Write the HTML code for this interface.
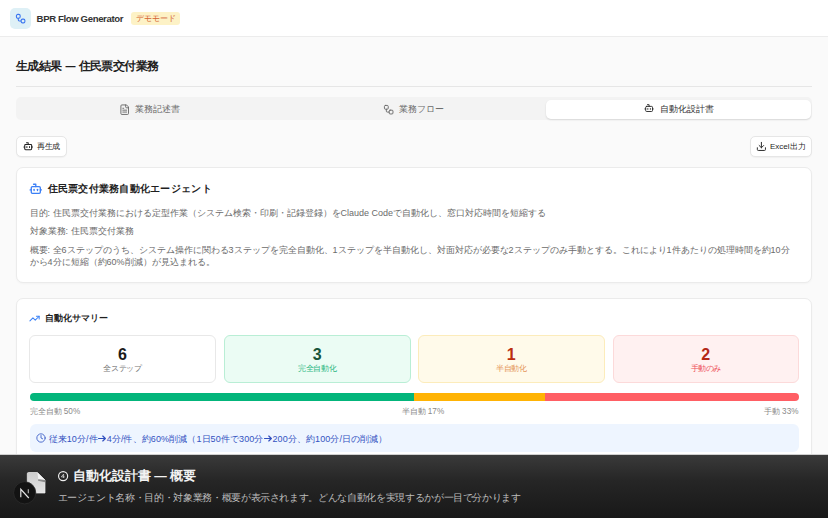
<!DOCTYPE html>
<html lang="ja">
<head>
<meta charset="utf-8">
<style>
*{box-sizing:border-box;margin:0;padding:0}
html,body{width:828px;height:518px;overflow:hidden}
body{background:#fafafa;font-family:"Liberation Sans",sans-serif;color:#222;position:relative}
.abs{position:absolute}
.hdr{position:absolute;left:0;top:0;width:828px;height:37px;background:#fff;border-bottom:1px solid #ececec}
.logo{position:absolute;left:10px;top:8px;width:21px;height:21px;border-radius:5px;background:#def0f6}
.brand{position:absolute;left:36.6px;top:12.8px;font-size:9.6px;letter-spacing:-0.38px;font-weight:bold;color:#333;white-space:nowrap;line-height:12px}
.badge{position:absolute;left:131px;top:12px;width:49px;height:13px;border-radius:3px;background:#fdf2c6;color:#d4612e;font-size:7.5px;line-height:13px;text-align:center;white-space:nowrap}
.title{position:absolute;left:16px;top:58px;font-size:12px;letter-spacing:-0.6px;font-weight:bold;line-height:16px;white-space:nowrap;color:#1f1f1f}
.hr{position:absolute;left:16px;top:86px;width:796px;height:1px;background:#e6e6e6}
.tabs{position:absolute;left:16px;top:97px;width:796px;height:23px;border-radius:5px;background:#f3f3f3}
.tabact{position:absolute;left:546px;top:100px;width:265px;height:19px;background:#fff;border-radius:5px;box-shadow:0 1px 2px rgba(0,0,0,.12)}
.tabt{position:absolute;top:102.5px;font-size:9px;line-height:13px;white-space:nowrap}
.btn{position:absolute;top:136px;height:21px;background:#fff;border:1px solid #e6e6e6;border-radius:5px;box-shadow:0 1px 1px rgba(0,0,0,.04)}
.btnt{position:absolute;top:140.6px;font-size:8px;line-height:12px;color:#1f1f1f;white-space:nowrap}
.card{position:absolute;left:16px;width:796px;background:#fff;border:1px solid #ebebeb;border-radius:7px;box-shadow:0 1px 2px rgba(0,0,0,.03)}
.ctitle{position:absolute;left:47.5px;top:181.5px;font-size:10px;letter-spacing:0.27px;font-weight:bold;line-height:14px;white-space:nowrap;color:#1f1f1f}
.p{position:absolute;left:30px;font-size:9px;line-height:12.5px;color:#6b6b6b;white-space:nowrap}
.stitle{position:absolute;left:44.8px;top:311.6px;font-size:9px;font-weight:bold;line-height:13px;white-space:nowrap;color:#1f1f1f}
.stat{position:absolute;top:334.5px;height:48px;width:186.5px;border-radius:6px;border:1px solid #e8e8e8;text-align:center}
.stat .n{position:absolute;left:0;right:0;top:10px;font-size:16px;font-weight:bold;line-height:18px}
.stat .l{position:absolute;left:0;right:0;top:27.5px;font-size:7.7px;line-height:11px;letter-spacing:-0.4px}
.bar{position:absolute;left:29.5px;top:393px;width:769.5px;height:8px;border-radius:4px;overflow:hidden;display:flex}
.blab{position:absolute;top:405.5px;font-size:8.2px;line-height:11px;color:#8a8a8a;white-space:nowrap}
.info{position:absolute;left:29.5px;top:424px;width:769.5px;height:28px;border-radius:6px;background:#eef5ff}
.itext{position:absolute;left:48.5px;top:432.5px;font-size:9px;letter-spacing:0.1px;line-height:13px;color:#3352bf;white-space:nowrap}
.ov{position:absolute;left:0;top:454px;width:828px;height:64px;background:linear-gradient(#3a3a3a 0,#262626 40%,#181818 100%);border-top:1px solid #d0d0d0}
.ovt{position:absolute;left:58px;top:467px;font-size:12.5px;font-weight:bold;line-height:16px;color:#f2f2f2;white-space:nowrap}
.ovs{position:absolute;left:57.5px;top:490.5px;font-size:9.6px;letter-spacing:-0.35px;line-height:13px;color:#bdbdbd;white-space:nowrap}
</style>
</head>
<body>
<div class="hdr"></div>
<div class="logo"></div>
<svg class="abs" style="left:15.3px;top:12.8px" width="11.3" height="11.3" viewBox="0 0 24 24" fill="none" stroke="#3b76f0" stroke-width="2.3" stroke-linecap="round" stroke-linejoin="round"><rect width="8" height="8" x="3" y="3" rx="3"/><path d="M7 11v4a2 2 0 0 0 2 2h4"/><rect width="8" height="8" x="13" y="13" rx="3"/></svg>
<div class="brand">BPR Flow Generator</div>
<div class="badge">デモモード</div>

<div class="title">生成結果<span style="letter-spacing:0;font-size:10px;margin:0 0.4px 0 1px"> — </span>住民票交付業務</div>
<div class="hr"></div>

<div class="tabs"></div>
<div class="tabact"></div>
<svg class="abs" style="left:118.8px;top:103.5px" width="11.4" height="11.4" viewBox="0 0 24 24" fill="none" stroke="#6a6a6a" stroke-width="2" stroke-linecap="round" stroke-linejoin="round"><path d="M15 2H6a2 2 0 0 0-2 2v16a2 2 0 0 0 2 2h12a2 2 0 0 0 2-2V7Z"/><path d="M14 2v4a2 2 0 0 0 2 2h4"/><path d="M10 9H8"/><path d="M16 13H8"/><path d="M16 17H8"/></svg>
<div class="tabt" style="left:134.5px;color:#6a6a6a">業務記述書</div>
<svg class="abs" style="left:383px;top:103.5px" width="11.4" height="11.4" viewBox="0 0 24 24" fill="none" stroke="#6a6a6a" stroke-width="2" stroke-linecap="round" stroke-linejoin="round"><rect width="8" height="8" x="3" y="3" rx="2"/><path d="M7 11v4a2 2 0 0 0 2 2h4"/><rect width="8" height="8" x="13" y="13" rx="2"/></svg>
<div class="tabt" style="left:399px;color:#6a6a6a">業務フロー</div>
<svg class="abs" style="left:643.8px;top:103.4px" width="10.2" height="10.2" viewBox="0 0 24 24" fill="none" stroke="#2a2a2a" stroke-width="2.2" stroke-linecap="round" stroke-linejoin="round"><path d="M12 8V4H8"/><rect width="16" height="12" x="4" y="8" rx="2"/><path d="M2 14h2"/><path d="M20 14h2"/><path d="M15 13v2"/><path d="M9 13v2"/></svg>
<div class="tabt" style="left:659.5px;color:#333">自動化設計書</div>

<div class="btn" style="left:16px;width:51px"></div>
<svg class="abs" style="left:22.7px;top:141px" width="10.4" height="10.4" viewBox="0 0 24 24" fill="none" stroke="#222" stroke-width="2.4" stroke-linecap="round" stroke-linejoin="round"><path d="M12 8V4H8"/><rect width="16" height="12" x="4" y="8" rx="2"/><path d="M2 14h2"/><path d="M20 14h2"/><path d="M15 13v2"/><path d="M9 13v2"/></svg>
<div class="btnt" style="left:37px;letter-spacing:-0.33px">再生成</div>
<div class="btn" style="left:750px;width:62px"></div>
<svg class="abs" style="left:756px;top:141.1px" width="10.8" height="10.8" viewBox="0 0 24 24" fill="none" stroke="#2a2a2a" stroke-width="2.2" stroke-linecap="round" stroke-linejoin="round"><path d="M21 15v4a2 2 0 0 1-2 2H5a2 2 0 0 1-2-2v-4"/><polyline points="7 10 12 15 17 10"/><line x1="12" x2="12" y1="15" y2="3"/></svg>
<div class="btnt" style="left:770px">Excel出力</div>

<div class="card" style="top:167px;height:116px"></div>
<svg class="abs" style="left:28.5px;top:182.1px" width="13.6" height="13.6" viewBox="0 0 24 24" fill="none" stroke="#3b7ff6" stroke-width="2.3" stroke-linecap="round" stroke-linejoin="round"><path d="M12 8V4H8"/><rect width="16" height="12" x="4" y="8" rx="2"/><path d="M2 14h2"/><path d="M20 14h2"/><path d="M15 13v2"/><path d="M9 13v2"/></svg>
<div class="ctitle">住民票交付業務自動化エージェント</div>
<div class="p" style="left:29.5px;top:206.5px">目的: 住民票交付業務における定型作業（システム検索・印刷・記録登録）をClaude Codeで自動化し、窓口対応時間を短縮する</div>
<div class="p" style="left:29.5px;top:224.5px">対象業務: 住民票交付業務</div>
<div class="p" style="left:29.5px;top:244px">概要: 全6ステップのうち、システム操作に関わる3ステップを完全自動化、1ステップを半自動化し、対面対応が必要な2ステップのみ手動とする。これにより1件あたりの処理時間を約10分</div>
<div class="p" style="left:29.5px;top:256px">から4分に短縮（約60%削減）が見込まれる。</div>

<div class="card" style="top:298px;height:240px"></div>
<svg class="abs" style="left:28.8px;top:312.6px" width="11.1" height="11.1" viewBox="0 0 24 24" fill="none" stroke="#3b82f6" stroke-width="2.2" stroke-linecap="round" stroke-linejoin="round"><polyline points="22 7 13.5 15.5 8.5 10.5 2 17"/><polyline points="16 7 22 7 22 13"/></svg>
<div class="stitle">自動化サマリー</div>

<div class="stat" style="left:29.2px;background:#fff;border-color:#e8e8e8"><div class="n" style="color:#1a1a1a">6</div><div class="l" style="color:#777">全ステップ</div></div>
<div class="stat" style="left:224px;background:#ebfcf4;border-color:#b9eed5"><div class="n" style="color:#17543a">3</div><div class="l" style="color:#2db883">完全自動化</div></div>
<div class="stat" style="left:418px;background:#fffaea;border-color:#fcecbb"><div class="n" style="color:#bb2e10">1</div><div class="l" style="color:#e5975a">半自動化</div></div>
<div class="stat" style="left:612.5px;background:#fff1f1;border-color:#fcdada"><div class="n" style="color:#b42816">2</div><div class="l" style="color:#ee4f58">手動のみ</div></div>

<div class="bar"><div style="width:50%;background:#03b57b"></div><div style="width:17%;background:#ffb304"></div><div style="width:33%;background:#ff5e64"></div></div>
<div class="blab" style="left:29.5px">完全自動 50%</div>
<div class="blab" style="left:401.5px">半自動 17%</div>
<div class="blab" style="right:29.5px">手動 33%</div>

<div class="info"></div>
<svg class="abs" style="left:36.4px;top:433.4px" width="10" height="10" viewBox="0 0 24 24" fill="none" stroke="#3a5cc6" stroke-width="2.1" stroke-linecap="round" stroke-linejoin="round"><circle cx="12" cy="12" r="10"/><polyline points="12 6 12 12 16 14"/></svg>
<div class="itext">従来10分/件<svg width="8.6" height="7" viewBox="0 0 9 7" style="margin:0 0.2px;vertical-align:0px"><path d="M.6 3.5H7.6M5 .9L7.7 3.5L5 6.1" fill="none" stroke="#2f4fbf" stroke-width="1.25" stroke-linejoin="round" stroke-linecap="round"/></svg>4分/件、約60%削減（1日50件で300分<svg width="8.6" height="7" viewBox="0 0 9 7" style="margin:0 0.2px;vertical-align:0px"><path d="M.6 3.5H7.6M5 .9L7.7 3.5L5 6.1" fill="none" stroke="#2f4fbf" stroke-width="1.25" stroke-linejoin="round" stroke-linecap="round"/></svg>200分、約100分/日の削減）</div>

<div class="ov"></div>
<svg class="abs" style="left:26px;top:471px" width="21" height="24" viewBox="0 0 21 24"><defs><linearGradient id="dg" x1="0" y1="0" x2="0" y2="1"><stop offset="0" stop-color="#cdcdcd"/><stop offset="1" stop-color="#e4e4e4"/></linearGradient></defs><path d="M2.6 1.5H11.4L19 9V22H1.3V2.8Q1.3 1.5 2.6 1.5Z" fill="url(#dg)" stroke="#efefef" stroke-width=".7"/><path d="M11.4 1.5L19 9L12.3 8.2Z" fill="#f4f4f4"/><path d="M12.3 8.2L19 9V11.2L12 9.8Z" fill="#8c8c8c"/></svg>
<svg class="abs" style="left:13px;top:481px" width="24" height="24" viewBox="0 0 24 24"><circle cx="11.7" cy="11.8" r="11.1" fill="#131313" stroke="#303030" stroke-width=".7"/><path d="M7.8 16.2V8.3L15.8 17" fill="none" stroke="#e6e6e6" stroke-width="1.15"/><path d="M15.3 8.3V12.3" fill="none" stroke="#bdbdbd" stroke-width="1.1"/></svg>
<svg class="abs" style="left:57px;top:469.5px" width="12" height="12" viewBox="0 0 12 12"><circle cx="6.1" cy="6.1" r="4.55" fill="none" stroke="#efefef" stroke-width="1.15"/><path d="M6.6 8V4.1L4.3 6.9H7.6" fill="none" stroke="#dcdcdc" stroke-width=".75"/></svg>
<div class="ovt" style="left:72.8px;top:467.8px">自動化設計書 — 概要</div>
<div class="ovs">エージェント名称・目的・対象業務・概要が表示されます。どんな自動化を実現するかが一目で分かります</div>
</body>
</html>
